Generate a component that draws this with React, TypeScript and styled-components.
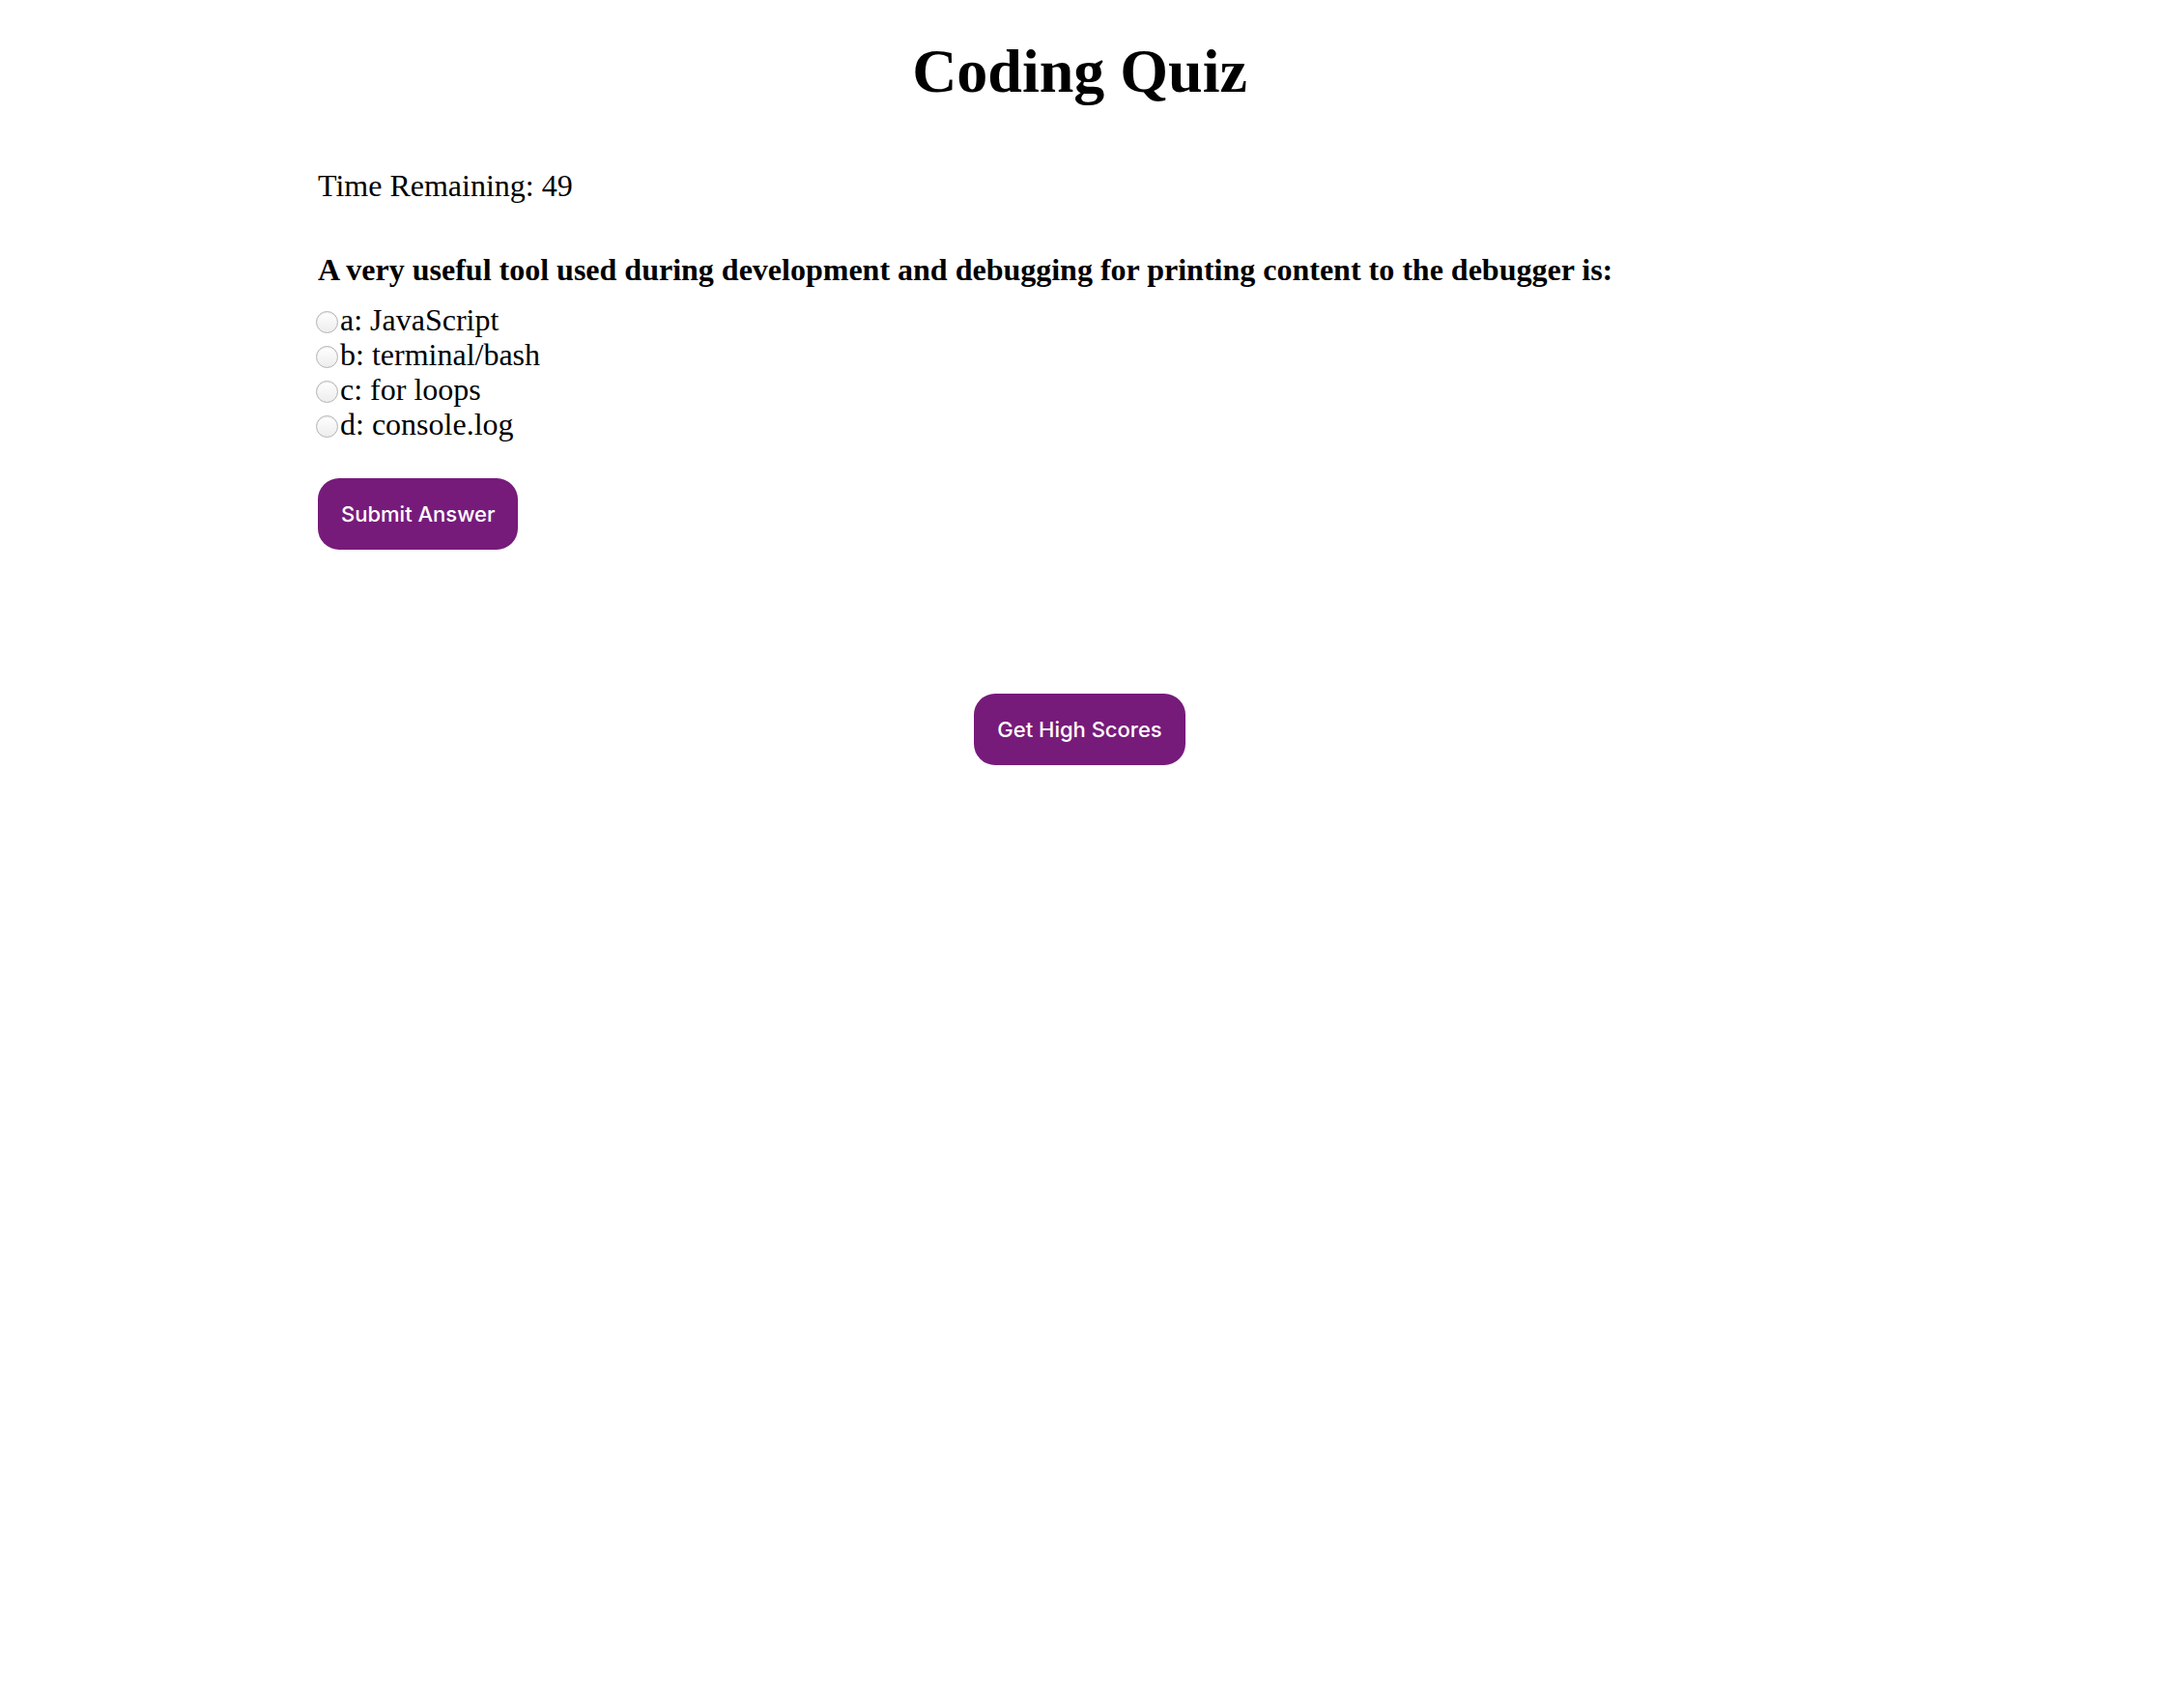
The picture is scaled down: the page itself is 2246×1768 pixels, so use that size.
import React, {FC, useState} from 'react';
import styled, {createGlobalStyle} from 'styled-components';

const GlobalStyle = createGlobalStyle`
  html, body {
    margin: 0;
    padding: 0;
    background: #ffffff;
  }
  body {
    font-family: "Liberation Serif", "Times New Roman", serif;
    color: #000000;
  }
`

const Page = styled.div`
  padding: 37px 11px 0 0;
`

const Title = styled.h1`
  margin: 0;
  font-size: 64px;
  line-height: 74px;
  font-weight: 700;
  text-align: center;
`

const Quiz = styled.section`
  width: 1577px;
  margin: 0 auto;
`

const Timer = styled.p`
  margin: 63px 0 0;
  font-size: 32px;
  line-height: 36px;
`

const Question = styled.h3`
  margin: 51px 0 0;
  font-size: 32px;
  line-height: 36px;
  font-weight: 700;
`

const Choices = styled.div`
  margin-top: 16px;
  display: flex;
  flex-direction: column;
`

const Choice = styled.label`
  display: flex;
  align-items: center;
  height: 36px;
  font-size: 32px;
  line-height: 36px;
`

const Radio = styled.input`
  appearance: none;
  width: 23px;
  height: 23px;
  margin: 5px 2px 0 -2px;
  border-radius: 50%;
  border: 1px solid #b3b3b3;
  background: linear-gradient(#ffffff, #ededed);
  box-shadow: inset 0 1px 1px rgba(0, 0, 0, 0.08);
  box-sizing: border-box;
  flex: none;

  &:checked {
    border: 7px solid #761b7a;
    background: #ffffff;
  }
`

const Button = styled.button<{ $center?: boolean }>`
  display: block;
  margin: ${p => p.$center ? '149px auto 0' : '38px 0 0'};
  padding: 24px;
  border: none;
  border-radius: 22px;
  background: #761b7a;
  color: #ffffff;
  font-family: Inter, "Liberation Sans", sans-serif;
  font-size: 22px;
  font-weight: 500;
  line-height: 26px;
  cursor: pointer;
`

const choices = [
    'a: JavaScript',
    'b: terminal/bash',
    'c: for loops',
    'd: console.log',
]

const App: FC = () => {
    const [picked, setPicked] = useState<string | null>(null)

    return (
        <Page>
            <GlobalStyle/>
            <Title>Coding Quiz</Title>
            <Quiz>
                <Timer>Time Remaining: 49</Timer>
                <Question>
                    A very useful tool used during development and debugging for printing content to the debugger is:
                </Question>
                <Choices>
                    {choices.map(c => (
                        <Choice key={c}>
                            <Radio
                                type="radio"
                                name="answer"
                                checked={picked === c}
                                onChange={() => setPicked(c)}
                            />
                            {c}
                        </Choice>
                    ))}
                </Choices>
                <Button>Submit Answer</Button>
            </Quiz>
            <Button $center>Get High Scores</Button>
        </Page>
    );
};

export default App;
